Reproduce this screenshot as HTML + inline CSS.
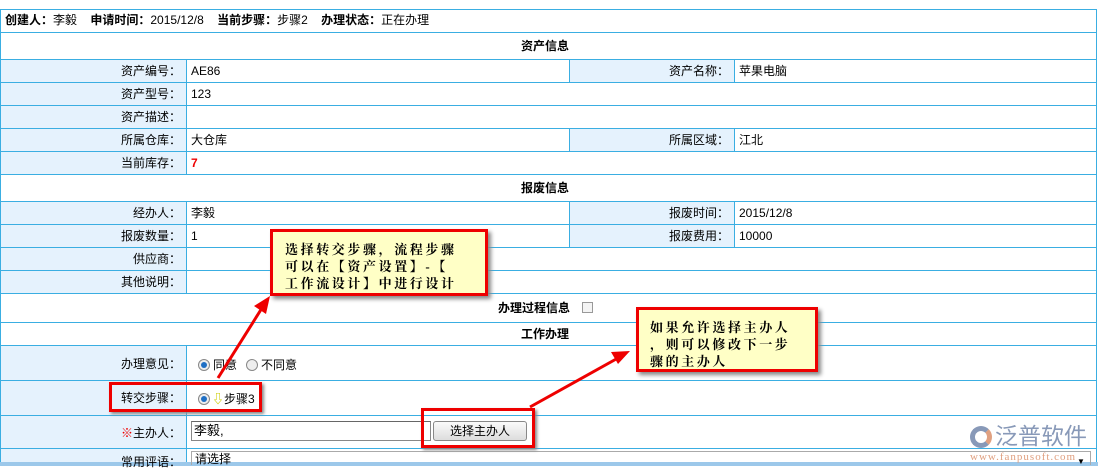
<!DOCTYPE html><html><head><meta charset="utf-8"><style>
*{margin:0;padding:0;box-sizing:border-box}
body{width:1098px;height:466px;overflow:hidden;background:#fff;position:relative;font-family:"Liberation Sans","Noto Sans CJK SC",sans-serif;font-size:12px;color:#000}
.a{position:absolute}
.h{position:absolute;left:0;width:1097px;height:1px;background:#3aaee2}
.v{position:absolute;width:1px;background:#3aaee2}
.lb{position:absolute;background:#e5f2fd}
.t{position:absolute;white-space:nowrap;line-height:14px}
.r{text-align:right}
b{font-weight:bold}
.call{position:absolute;background:#ffffc6;border:3px solid #e00;box-shadow:3px 3px 4px #888;font-weight:bold;font-size:13px;letter-spacing:2.6px;line-height:17px;font-family:"Liberation Serif","Noto Serif CJK SC",serif;white-space:nowrap}
.radio{position:absolute;width:12px;height:12px;border-radius:50%;border:1px solid #888;background:#eee}
.radio.on::after{content:"";position:absolute;left:2px;top:2px;width:6px;height:6px;border-radius:50%;background:#1f6fc4}
</style></head><body>
<div class="lb" style="left:1px;top:60px;width:185px;height:114px"></div>
<div class="lb" style="left:570px;top:60px;width:164px;height:22px"></div>
<div class="lb" style="left:570px;top:129px;width:164px;height:22px"></div>
<div class="lb" style="left:1px;top:202px;width:185px;height:91px"></div>
<div class="lb" style="left:570px;top:202px;width:164px;height:45px"></div>
<div class="lb" style="left:1px;top:346px;width:185px;height:120px"></div>
<div class="h" style="top:9px"></div><div class="h" style="top:32px"></div><div class="h" style="top:59px"></div>
<div class="h" style="top:82px"></div><div class="h" style="top:105px"></div><div class="h" style="top:128px"></div>
<div class="h" style="top:151px"></div><div class="h" style="top:174px"></div><div class="h" style="top:201px"></div>
<div class="h" style="top:224px"></div><div class="h" style="top:247px"></div><div class="h" style="top:270px"></div>
<div class="h" style="top:293px"></div><div class="h" style="top:322px"></div><div class="h" style="top:345px"></div>
<div class="h" style="top:380px"></div><div class="h" style="top:415px"></div><div class="h" style="top:448px"></div>
<div class="v" style="left:0;top:9px;height:457px"></div><div class="v" style="left:1096px;top:9px;height:457px"></div>
<div class="v" style="left:186px;top:59px;height:115px"></div><div class="v" style="left:186px;top:201px;height:92px"></div><div class="v" style="left:186px;top:345px;height:121px"></div>
<div class="v" style="left:569px;top:59px;height:23px"></div><div class="v" style="left:734px;top:59px;height:23px"></div>
<div class="v" style="left:569px;top:128px;height:23px"></div><div class="v" style="left:734px;top:128px;height:23px"></div>
<div class="v" style="left:569px;top:201px;height:46px"></div><div class="v" style="left:734px;top:201px;height:46px"></div>
<div class="a" style="left:0;top:462px;width:1098px;height:4px;background:#9cc8ea"></div>
<div class="t" style="left:5px;top:13px"><b>创建人：</b>李毅 &nbsp;&nbsp; <b>申请时间：</b>2015/12/8 &nbsp;&nbsp; <b>当前步骤：</b>步骤2 &nbsp;&nbsp; <b>办理状态：</b>正在办理</div>
<div class="t" style="left:521px;top:39px"><b>资产信息</b></div>
<div class="t r" style="right:917px;top:64px">资产编号：</div><div class="t" style="left:191px;top:64px">AE86</div>
<div class="t r" style="right:369px;top:64px">资产名称：</div><div class="t" style="left:739px;top:64px">苹果电脑</div>
<div class="t r" style="right:917px;top:87px">资产型号：</div><div class="t" style="left:191px;top:87px">123</div>
<div class="t r" style="right:917px;top:110px">资产描述：</div>
<div class="t r" style="right:917px;top:133px">所属仓库：</div><div class="t" style="left:191px;top:133px">大仓库</div>
<div class="t r" style="right:369px;top:133px">所属区域：</div><div class="t" style="left:739px;top:133px">江北</div>
<div class="t r" style="right:917px;top:156px">当前库存：</div><div class="t" style="left:191px;top:156px;color:#e00"><b>7</b></div>
<div class="t" style="left:521px;top:181px"><b>报废信息</b></div>
<div class="t r" style="right:917px;top:206px">经办人：</div><div class="t" style="left:191px;top:206px">李毅</div>
<div class="t r" style="right:369px;top:206px">报废时间：</div><div class="t" style="left:739px;top:206px">2015/12/8</div>
<div class="t r" style="right:917px;top:229px">报废数量：</div><div class="t" style="left:191px;top:229px">1</div>
<div class="t r" style="right:369px;top:229px">报废费用：</div><div class="t" style="left:739px;top:229px">10000</div>
<div class="t r" style="right:917px;top:252px">供应商：</div>
<div class="t r" style="right:917px;top:275px">其他说明：</div>
<div class="t" style="left:498px;top:301px"><b>办理过程信息</b></div>
<div class="a" style="left:582px;top:302px;width:11px;height:11px;border:1px solid #999;background:#f4f4f4"></div>
<div class="t" style="left:521px;top:327px"><b>工作办理</b></div>
<div class="t r" style="right:917px;top:357px">办理意见：</div>
<div class="radio on" style="left:198px;top:359px"></div><div class="t" style="left:213px;top:358px">同意</div>
<div class="radio" style="left:246px;top:359px"></div><div class="t" style="left:261px;top:358px">不同意</div>
<div class="t r" style="right:917px;top:391px">转交步骤：</div>
<div class="radio on" style="left:198px;top:393px"></div>
<div class="t" style="left:212px;top:392px"><span style="color:#cc0;font-weight:bold">⇩</span>步骤3</div>
<div class="t r" style="right:917px;top:426px"><span style="color:#e00">※</span>主办人：</div>
<div class="a" style="left:191px;top:421px;width:240px;height:20px;border:1px solid #888;border-top-color:#666;background:#fff;font-size:13px;line-height:18px;padding-left:2px">李毅,</div>
<div class="a" style="left:433px;top:421px;width:94px;height:20px;border:1px solid #888;border-radius:3px;background:linear-gradient(#fafafa,#ddd);text-align:center;line-height:18px;font-size:12px">选择主办人</div>
<div class="t r" style="right:917px;top:455px">常用评语：</div>
<div class="a" style="left:191px;top:451px;width:900px;height:14px;border:1px solid #aaa;border-bottom:none;padding-left:3px;font-size:12px;line-height:14px">请选择</div>
<div class="t" style="left:1077px;top:455px;font-size:8px">▼</div>
<div class="t" style="left:995px;top:421px;font-size:23px;line-height:26px;color:#8899b8;font-family:'Noto Sans CJK SC',sans-serif">泛普软件</div>
<div class="a" style="left:970px;top:426px;width:22px;height:22px;border-radius:50%;border:5px solid #8899b8;border-right-color:#e0a080"></div>
<div class="t" style="left:970px;top:450px;font-size:11px;color:#e0a080;font-family:'Liberation Serif',serif;letter-spacing:1px">www.fanpusoft.com</div>
<div class="call" style="left:270px;top:229px;width:218px;height:67px;padding:9px 0 0 12px">选择转交步骤，流程步骤<br>可以在【资产设置】-【<br>工作流设计】中进行设计</div>
<div class="call" style="left:636px;top:307px;width:182px;height:65px;padding:9px 0 0 11px">如果允许选择主办人<br>，则可以修改下一步<br>骤的主办人</div>
<div class="a" style="left:109px;top:382px;width:153px;height:30px;border:3px solid #e00;box-shadow:2px 2px 3px #888"></div>
<div class="a" style="left:421px;top:408px;width:114px;height:40px;border:3px solid #e00;box-shadow:2px 2px 3px #888"></div>
<svg class="a" style="left:0;top:0" width="1098" height="466">
<line x1="218" y1="378" x2="262" y2="308" stroke="#e00" stroke-width="3"/>
<polygon points="270,296 254,306 266,314" fill="#e00"/>
<line x1="530" y1="407" x2="618" y2="358" stroke="#e00" stroke-width="3"/>
<polygon points="630,351 611,352 618,364" fill="#e00"/>
</svg>
</body></html>
